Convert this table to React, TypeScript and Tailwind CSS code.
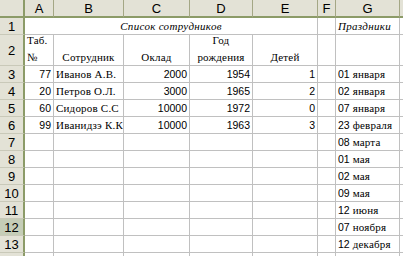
import React from "react";

const sans = "font-['Liberation_Sans',Arial,sans-serif]";
const serif = "font-['Liberation_Serif','Times_New_Roman',serif]";
const hdrFont = "font-['Liberation_Sans_Narrow','Arial_Narrow','Liberation_Sans',sans-serif] text-[13px]";

const letters = ["A", "B", "C", "D", "E", "F", "G", ""];

const staff = [
  { n: "77", name: "Иванов А.В.", pay: "2000", year: "1954", kids: "1" },
  { n: "20", name: "Петров О.Л.", pay: "3000", year: "1965", kids: "2" },
  { n: "60", name: "Сидоров С.С", pay: "10000", year: "1972", kids: "0" },
  { n: "99", name: "Иванидзэ К.К", pay: "10000", year: "1963", kids: "3" },
];

const holidays = [
  "01 января",
  "02 января",
  "07 января",
  "23 февраля",
  "08 марта",
  "01 мая",
  "02 мая",
  "09 мая",
  "12 июня",
  "07 ноября",
  "12 декабря",
];

// digits look like Arial in the shot, cyrillic like a small serif
function Txt({ s }: { s: string }) {
  return (
    <span className="whitespace-pre">
      {s.split(/(\d+)/).map((p, i) =>
        /^\d+$/.test(p) ? (
          <span key={i} className={`${sans} text-[10.5px]`}>
            {p}
          </span>
        ) : (
          <span key={i} className={`${serif} text-[11px] tracking-[0.2px]`}>
            {p}
          </span>
        )
      )}
    </span>
  );
}

function Cell({
  children,
  className = "",
}: {
  children?: React.ReactNode;
  className?: string;
}) {
  return (
    <div
      className={`flex items-end overflow-hidden whitespace-nowrap border-r border-b border-[#c0c0c0] px-[2px] leading-[15px] text-black ${className}`}
    >
      {children}
    </div>
  );
}

function RowHead({ n, label = true }: { n: number; label?: boolean }) {
  return (
    <div
      className={`flex items-center justify-center border-r-2 border-b border-r-[#8c9b68] border-b-[#c9c9b9] leading-none text-black ${hdrFont} ${
        n === 12 ? "bg-[#c5cdb7]" : "bg-[#e3e2d6]"
      }`}
    >
      {label ? n : null}
    </div>
  );
}

export default function App() {
  return (
    <div className="w-[403px] h-[256px] overflow-hidden bg-white">
      <div className="grid grid-cols-[25px_29px_70px_66px_63px_65px_18px_64px_1fr] grid-rows-[18px_17px_31px_repeat(12,17px)]">
        {/* column headers */}
        <div className="bg-[#e3e2d6] border-r-2 border-b-2 border-r-[#8c9b68] border-b-[#8c9b68]" />
        {letters.map((l, i) => (
          <div
            key={i}
            className={`flex items-center justify-center bg-[#e3e2d6] border-r border-b-2 border-r-[#a4a785] border-b-[#8c9b68] leading-none text-black ${hdrFont}`}
          >
            {l}
          </div>
        ))}

        {/* row 1 */}
        <RowHead n={1} />
        <Cell className="col-span-5 justify-center">
          <span className={`${serif} text-[11px] italic tracking-[0.3px]`}>Список сотрудников</span>
        </Cell>
        <Cell />
        <Cell>
          <span className={`${serif} text-[11px] italic tracking-[0.3px]`}>Праздники</span>
        </Cell>
        <Cell />

        {/* row 2: wrapped headers */}
        <RowHead n={2} />
        <Cell className="flex-col !items-start justify-end">
          <Txt s="Таб." />
          <Txt s="№" />
        </Cell>
        <Cell className="justify-center">
          <Txt s="Сотрудник" />
        </Cell>
        <Cell className="justify-center">
          <Txt s="Оклад" />
        </Cell>
        <Cell className="flex-col !items-center justify-end">
          <Txt s="Год" />
          <Txt s="рождения" />
        </Cell>
        <Cell className="justify-center">
          <Txt s="Детей" />
        </Cell>
        <Cell />
        <Cell />
        <Cell />

        {/* rows 3..14 */}
        {Array.from({ length: 12 }).map((_, i) => {
          const p = staff[i];
          const h = holidays[i];
          return (
            <React.Fragment key={i}>
              <RowHead n={i + 3} label={i < 11} />
              <Cell className="justify-end">{p && <Txt s={p.n} />}</Cell>
              <Cell>{p && <Txt s={p.name} />}</Cell>
              <Cell className="justify-end">{p && <Txt s={p.pay} />}</Cell>
              <Cell className="justify-end">{p && <Txt s={p.year} />}</Cell>
              <Cell className="justify-end">{p && <Txt s={p.kids} />}</Cell>
              <Cell />
              <Cell>{h && <Txt s={h} />}</Cell>
              <Cell />
            </React.Fragment>
          );
        })}
      </div>
    </div>
  );
}
